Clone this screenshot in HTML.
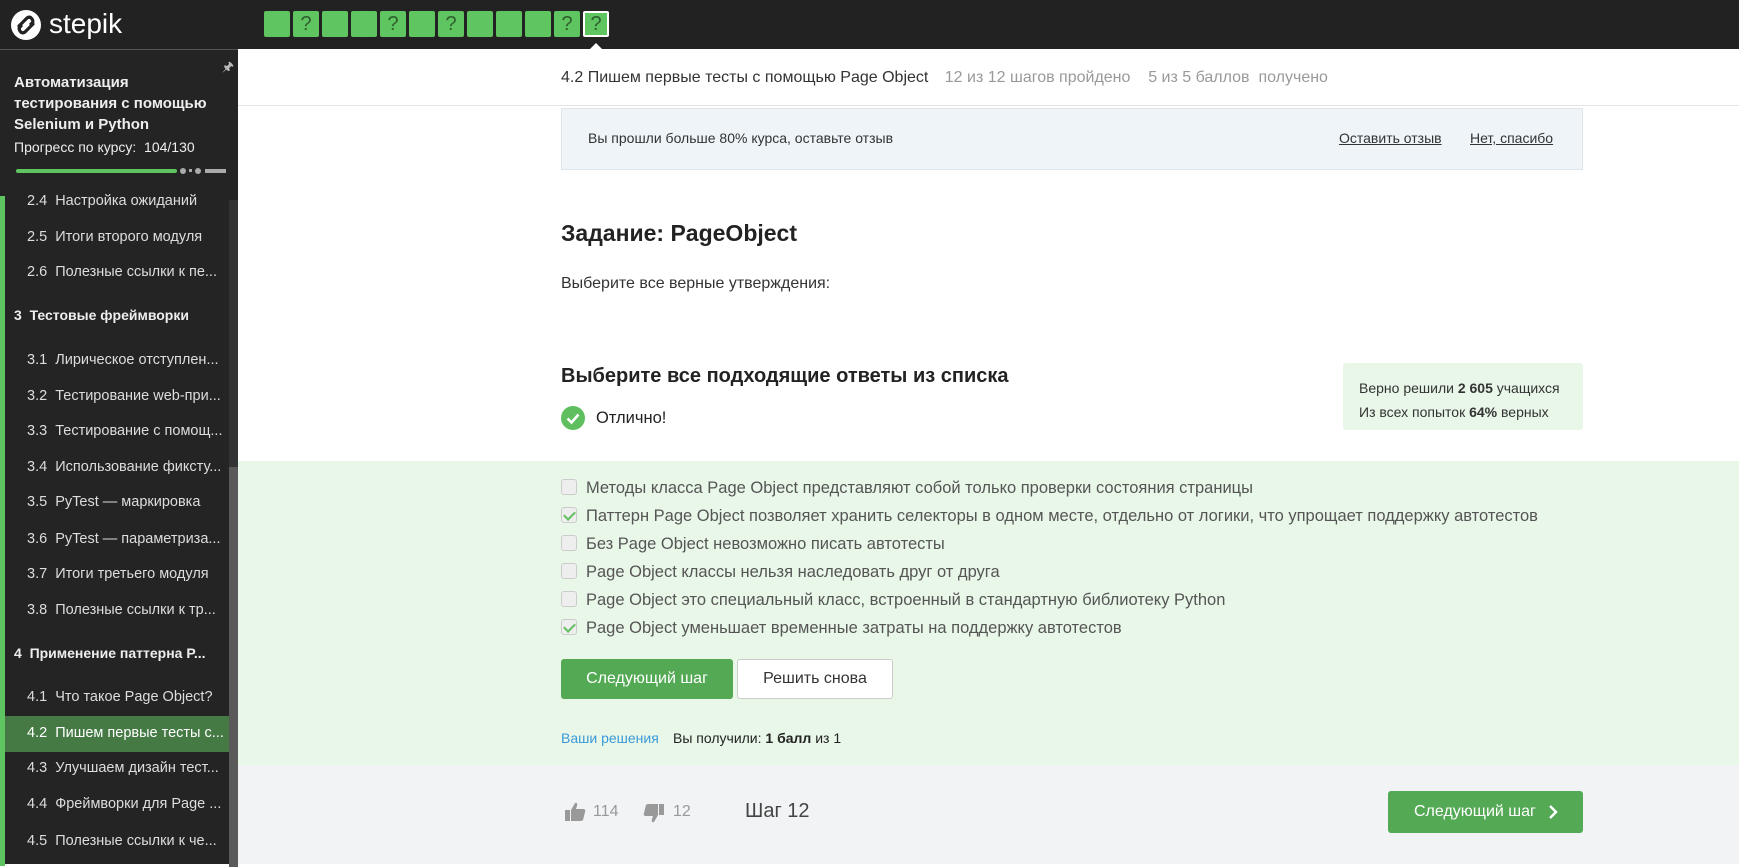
<!DOCTYPE html>
<html><head><meta charset="utf-8"><style>
*{margin:0;padding:0;box-sizing:border-box}
body{width:1739px;height:864px;overflow:hidden;font-family:"Liberation Sans","Noto Sans CJK SC",sans-serif;background:#fff;position:relative;color:#222}
.a{position:absolute;white-space:nowrap}
#hdr{left:0;top:0;width:1739px;height:49px;background:#222}
.sq{position:absolute;top:11px;width:26px;height:26px;background:#5fc560;border-radius:2px;color:#2f5f2f;font-size:20px;text-align:center;line-height:26px}
#side{left:0;top:49px;width:238px;height:815px;background:#242424;border-top:1px solid #555}
.it{position:absolute;left:27px;color:#ddd;font-size:14.5px}
.sec{position:absolute;left:14px;color:#eee;font-size:14px;font-weight:bold}
.opt{position:absolute;left:561px;font-size:16.5px;color:#555}
.cb{display:inline-block;width:16px;height:16px;border:1px solid #ccc;border-radius:3px;background:#eee;vertical-align:-2px;margin-right:9px;position:relative}
.cb.on::after{content:"";position:absolute;left:4px;top:1px;width:5px;height:9px;border:solid #5fbf5f;border-width:0 2px 2px 0;transform:rotate(45deg)}
</style></head><body>
<div id="hdr" class="a">
<svg style="position:absolute;left:10px;top:9px" width="32" height="32" viewBox="0 0 32 32"><circle cx="16" cy="16" r="15" fill="#fff"/><path d="M9 17 L17 9 Q20 7 22 10 Q24 13 21 15 M23 15 L15 23 Q12 25 10 22 Q8 19 11 17" stroke="#222" stroke-width="3.2" stroke-linecap="round" fill="none"/></svg>
<div class="a" style="left:49px;top:8px;color:#fff;font-size:28px">stepik</div>
<div class="sq" style="left:264px"></div><div class="sq" style="left:293px">?</div><div class="sq" style="left:322px"></div><div class="sq" style="left:351px"></div><div class="sq" style="left:380px">?</div><div class="sq" style="left:409px"></div><div class="sq" style="left:438px">?</div><div class="sq" style="left:467px"></div><div class="sq" style="left:496px"></div><div class="sq" style="left:525px"></div><div class="sq" style="left:554px">?</div><div class="sq" style="left:583px;border:2px solid #fff;line-height:22px">?</div>
<div class="a" style="left:590px;top:43px;width:0;height:0;border:6px solid transparent;border-bottom-color:#fff;border-top:0"></div>
</div>
<div id="side" class="a">
<div class="a" style="left:222px;top:8px;color:#bbb;font-size:13px">&#x1F588;</div>
<div class="a" style="left:14px;top:22px;color:#eee;font-size:15px;font-weight:bold;line-height:21px">Автоматизация<br>тестирования с помощью<br>Selenium и Python</div>
<div class="a" style="left:14px;top:89px;color:#eee;font-size:14px">Прогресс по курсу:&nbsp; 104/130</div>
<div class="a" style="left:16px;top:119px;width:161px;height:4px;background:#5fc560;border-radius:2px"></div>
<div class="a" style="left:180px;top:118px;width:6px;height:6px;background:#aaa;border-radius:3px"></div>
<div class="a" style="left:189px;top:119px;width:3px;height:3px;background:#aaa"></div>
<div class="a" style="left:195px;top:118px;width:6px;height:6px;background:#aaa;border-radius:3px"></div>
<div class="a" style="left:205px;top:119px;width:21px;height:4px;background:#aaa"></div>
<div class="a" style="left:0;top:146px;width:5px;height:670px;background:#5fc560"></div>
<div class="a" style="left:5px;top:666px;width:224px;height:36px;background:#457a45"></div>
<div class="a" style="left:229px;top:150px;width:9px;height:665px;background:#333"></div>
<div class="a" style="left:229px;top:417px;width:9px;height:400px;background:#5a5a5a"></div>
<div class="it" style="top:143px">2.4&nbsp; Настройка ожиданий</div>
<div class="it" style="top:179px">2.5&nbsp; Итоги второго модуля</div>
<div class="it" style="top:214px">2.6&nbsp; Полезные ссылки к пе...</div>
<div class="sec" style="top:257px">3&nbsp; Тестовые фреймворки</div>
<div class="it" style="top:302px">3.1&nbsp; Лирическое отступлен...</div>
<div class="it" style="top:338px">3.2&nbsp; Тестирование web-при...</div>
<div class="it" style="top:373px">3.3&nbsp; Тестирование с помощ...</div>
<div class="it" style="top:409px">3.4&nbsp; Использование фиксту...</div>
<div class="it" style="top:444px">3.5&nbsp; PyTest — маркировка</div>
<div class="it" style="top:481px">3.6&nbsp; PyTest — параметриза...</div>
<div class="it" style="top:516px">3.7&nbsp; Итоги третьего модуля</div>
<div class="it" style="top:552px">3.8&nbsp; Полезные ссылки к тр...</div>
<div class="sec" style="top:595px">4&nbsp; Применение паттерна P...</div>
<div class="it" style="top:639px">4.1&nbsp; Что такое Page Object?</div>
<div class="it" style="top:675px;color:#fff">4.2&nbsp; Пишем первые тесты с...</div>
<div class="it" style="top:710px">4.3&nbsp; Улучшаем дизайн тест...</div>
<div class="it" style="top:746px">4.4&nbsp; Фреймворки для Page ...</div>
<div class="it" style="top:783px">4.5&nbsp; Полезные ссылки к че...</div>
</div>
<div class="a" style="left:238px;top:105px;width:1501px;height:1px;background:#e3e3e3"></div>
<div class="a" style="left:561px;top:69px;font-size:16px;color:#333">4.2 Пишем первые тесты с помощью Page Object <span style="color:#999;margin-left:12px">12 из 12 шагов пройдено&nbsp;&nbsp;&nbsp; 5 из 5 баллов&nbsp; получено</span></div>
<div class="a" style="left:561px;top:108px;width:1022px;height:62px;background:#eef4f8;border:1px solid #dde5ea"></div>
<div class="a" style="left:588px;top:130px;font-size:14px;color:#333">Вы прошли больше 80% курса, оставьте отзыв</div>
<div class="a" style="left:1339px;top:130px;font-size:14px;color:#333;text-decoration:underline">Оставить отзыв</div>
<div class="a" style="left:1470px;top:130px;font-size:14px;color:#333;text-decoration:underline">Нет, спасибо</div>
<div class="a" style="left:561px;top:220px;font-size:23px;font-weight:bold;color:#222">Задание: PageObject</div>
<div class="a" style="left:561px;top:275px;font-size:16px;color:#333">Выберите все верные утверждения:</div>
<div class="a" style="left:561px;top:365px;font-size:20px;font-weight:bold;color:#222">Выберите все подходящие ответы из списка</div>
<div class="a" style="left:1343px;top:363px;width:240px;height:67px;background:#e8f7e8;border-radius:3px"></div>
<div class="a" style="left:1359px;top:376px;font-size:14px;color:#333;line-height:24px">Верно решили <b>2 605</b> учащихся<br>Из всех попыток <b>64%</b> верных</div>
<svg class="a" style="left:561px;top:406px" width="24" height="24"><circle cx="12" cy="12" r="12" fill="#5fbf5f"/><path d="M6.5 12.5l4 4 7-8" stroke="#fff" stroke-width="2.6" fill="none"/></svg>
<div class="a" style="left:596px;top:409px;font-size:16.5px;color:#222">Отлично!</div>
<div class="a" style="left:238px;top:461px;width:1501px;height:304px;background:#e8f7e8"></div>
<div class="opt" style="top:479px"><span class="cb"></span>Методы класса Page Object представляют собой только проверки состояния страницы</div>
<div class="opt" style="top:507px"><span class="cb on"></span>Паттерн Page Object позволяет хранить селекторы в одном месте, отдельно от логики, что упрощает поддержку автотестов</div>
<div class="opt" style="top:535px"><span class="cb"></span>Без Page Object невозможно писать автотесты</div>
<div class="opt" style="top:563px"><span class="cb"></span>Page Object классы нельзя наследовать друг от друга</div>
<div class="opt" style="top:591px"><span class="cb"></span>Page Object это специальный класс, встроенный в стандартную библиотеку Python</div>
<div class="opt" style="top:619px"><span class="cb on"></span>Page Object уменьшает временные затраты на поддержку автотестов</div>
<div class="a" style="left:561px;top:659px;width:172px;height:40px;background:#54a954;border-radius:3px;color:#fff;font-size:16px;text-align:center;line-height:40px">Следующий шаг</div>
<div class="a" style="left:737px;top:659px;width:156px;height:40px;background:#fff;border:1px solid #ccc;border-radius:3px;color:#333;font-size:16px;text-align:center;line-height:38px">Решить снова</div>
<div class="a" style="left:561px;top:730px;font-size:14px;color:#3a9ad9">Ваши решения</div>
<div class="a" style="left:673px;top:730px;font-size:14px;color:#222">Вы получили: <b>1 балл</b> из 1</div>
<div class="a" style="left:238px;top:765px;width:1501px;height:99px;background:#f2f3f5"></div>
<svg class="a" style="left:565px;top:801px" width="21" height="21" viewBox="0 0 21 21"><rect x="0" y="9" width="5" height="11" fill="#999"/><path d="M6 9 L10 2 Q13 1 12 5 L11 8 H19 Q21 9 20 11 L18 19 Q17 20 16 20 H6 Z" fill="#999"/></svg>
<div class="a" style="left:593px;top:803px;font-size:16px;color:#999">114</div>
<svg class="a" style="left:643px;top:803px;transform:rotate(180deg)" width="21" height="21" viewBox="0 0 21 21"><rect x="0" y="9" width="5" height="11" fill="#999"/><path d="M6 9 L10 2 Q13 1 12 5 L11 8 H19 Q21 9 20 11 L18 19 Q17 20 16 20 H6 Z" fill="#999"/></svg>
<div class="a" style="left:673px;top:803px;font-size:16px;color:#999">12</div>
<div class="a" style="left:745px;top:800px;font-size:20px;color:#444">Шаг 12</div>
<div class="a" style="left:1388px;top:791px;width:195px;height:42px;background:#54a954;border-radius:3px;color:#fff;font-size:16px;line-height:42px;padding-left:26px">Следующий шаг</div>
<svg class="a" style="left:1547px;top:804px" width="12" height="16"><path d="M3 2l6 6-6 6" stroke="#fff" stroke-width="2.5" fill="none"/></svg>
</body></html>
